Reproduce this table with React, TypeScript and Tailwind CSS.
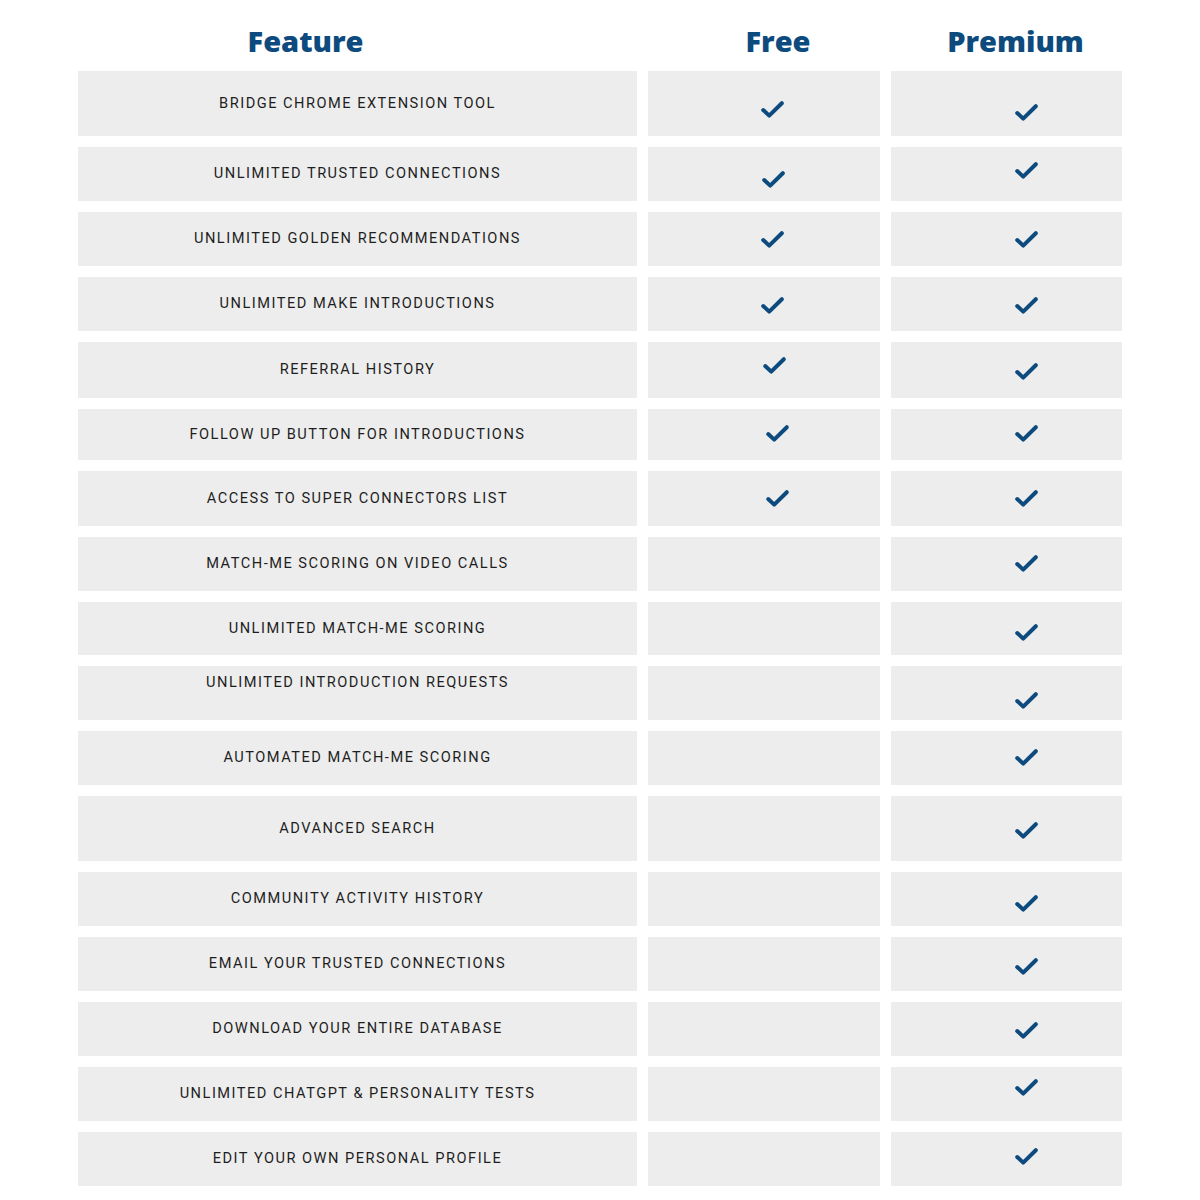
const rows = [
  { name: "Bridge Chrome Extension Tool", h: "h-[65px]", free: "translate-x-[8px] translate-y-[6px]", premium: "translate-y-[9px]", text: "" },
  { name: "Unlimited Trusted Connections", h: "h-[54px]", free: "translate-x-[9px] translate-y-[5px]", premium: "-translate-y-[4px]", text: "" },
  { name: "Unlimited Golden Recommendations", h: "h-[54px]", free: "translate-x-[8px]", premium: "", text: "" },
  { name: "Unlimited Make Introductions", h: "h-[54px]", free: "translate-x-[8px] translate-y-[1px]", premium: "translate-y-[1px]", text: "" },
  { name: "Referral History", h: "h-[56px]", free: "translate-x-[10px] -translate-y-[5px]", premium: "translate-y-[1px]", text: "" },
  { name: "Follow Up Button for Introductions", h: "h-[51px]", free: "translate-x-[13px] -translate-y-[1px]", premium: "-translate-y-[1px]", text: "" },
  { name: "Access to Super Connectors List", h: "h-[55px]", free: "translate-x-[13px]", premium: "", text: "" },
  { name: "Match-Me Scoring on Video Calls", h: "h-[54px]", free: null, premium: "-translate-y-[1px]", text: "" },
  { name: "Unlimited Match-Me Scoring", h: "h-[53px]", free: null, premium: "translate-y-[4px]", text: "" },
  { name: "Unlimited Introduction Requests", h: "h-[54px]", free: null, premium: "translate-y-[7px]", text: "-translate-y-[10px]" },
  { name: "Automated Match-Me Scoring", h: "h-[54px]", free: null, premium: "-translate-y-[1px]", text: "" },
  { name: "Advanced Search", h: "h-[65px]", free: null, premium: "translate-y-[2px]", text: "" },
  { name: "Community Activity History", h: "h-[54px]", free: null, premium: "translate-y-[4px]", text: "" },
  { name: "Email Your Trusted Connections", h: "h-[54px]", free: null, premium: "translate-y-[2px]", text: "" },
  { name: "Download Your Entire Database", h: "h-[54px]", free: null, premium: "translate-y-[1px]", text: "" },
  { name: "Unlimited ChatGPT & Personality Tests", h: "h-[54px]", free: null, premium: "-translate-y-[7px]", text: "" },
  { name: "Edit Your Own Personal Profile", h: "h-[54px]", free: null, premium: "-translate-y-[3px]", text: "" },
];

function Check({ className }: { className: string }) {
  return (
    <svg className={`w-[25px] h-[19px] ${className}`} viewBox="0 0 25 19" fill="none" aria-hidden="true">
      <path
        d="M3.2 10 L9.2 15.6 L21.8 3.2"
        stroke="#0d4a7e"
        strokeWidth={4}
        strokeLinecap="round"
        strokeLinejoin="round"
      />
    </svg>
  );
}

export default function App() {
  return (
    <div className="bg-white min-h-[1200px] font-['Roboto',sans-serif]">
      <div className="w-[1044px] mx-auto">
        <header className="grid grid-cols-[559px_232px_231px] gap-x-[11px] h-[71px] font-['Open_Sans',sans-serif] font-extrabold text-[29px] text-[#0d4a7e]">
          <div className="flex items-center justify-center -translate-x-[52px] translate-y-[5px]">Feature</div>
          <div className="flex items-center justify-center translate-x-[14px] translate-y-[5px]">Free</div>
          <div className="flex items-center justify-center translate-x-[9px] translate-y-[5px]">Premium</div>
        </header>

        <section className="flex flex-col gap-y-[11px]" aria-label="Plan comparison">
          {rows.map((row) => (
            <div key={row.name} className={`grid grid-cols-[559px_232px_231px] gap-x-[11px] ${row.h}`}>
              <div className="bg-[#ededed] flex items-center justify-center">
                <span className={`uppercase text-[14.6px] tracking-[1.5px] text-[#1e1e1e] ${row.text}`}>
                  {row.name}
                </span>
              </div>
              <div className="bg-[#ededed] flex items-center justify-center">
                {row.free !== null && <Check className={row.free} />}
              </div>
              <div className="bg-[#ededed] flex items-center justify-center">
                <Check className={`translate-x-[20px] ${row.premium}`} />
              </div>
            </div>
          ))}
        </section>
      </div>
    </div>
  );
}
